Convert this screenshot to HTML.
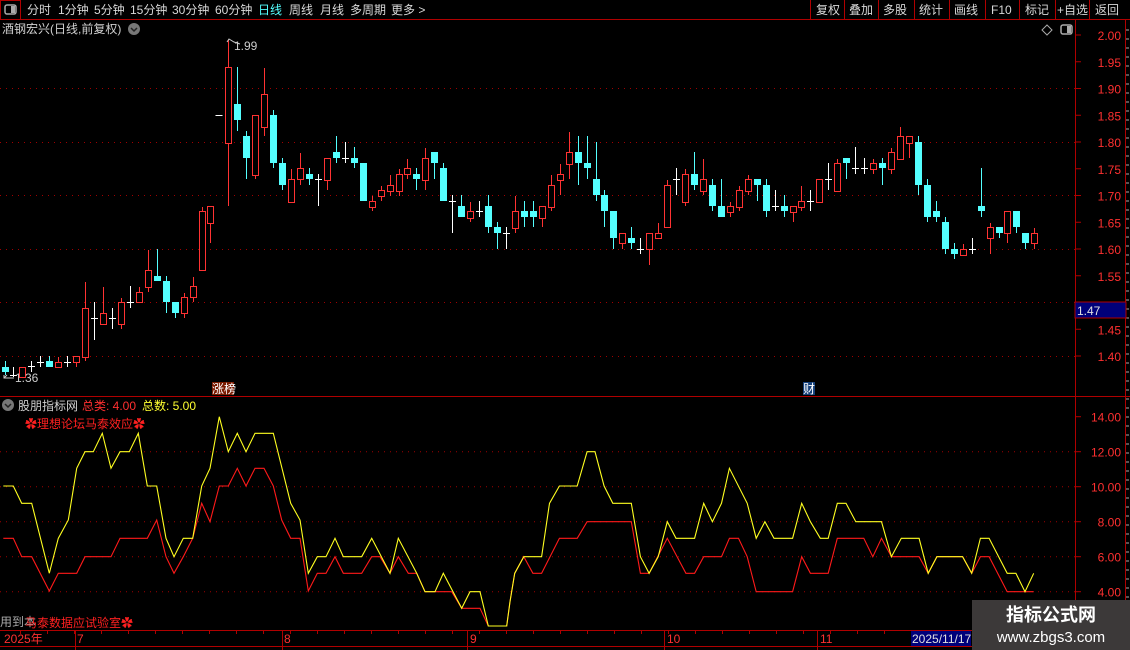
<!DOCTYPE html>
<html><head><meta charset="utf-8">
<style>
html,body{margin:0;padding:0;background:#000;width:1130px;height:650px;overflow:hidden}
svg{display:block}
text{font-family:"Liberation Sans","Noto Sans CJK SC",sans-serif;font-size:12px}
</style></head>
<body>
<svg id="s" width="1130" height="650" xmlns="http://www.w3.org/2000/svg">
<rect width="1130" height="650" fill="#000"/>
<line x1="0" y1="19.5" x2="1130" y2="19.5" stroke="#b00000"/>
<rect x="0.5" y="0.5" width="20" height="19" fill="none" stroke="#b00000"/>
<rect x="5" y="5" width="11" height="9" rx="2" fill="none" stroke="#aaa" stroke-width="1.5"/>
<rect x="11" y="6" width="4" height="7" fill="#aaa"/>
<g fill="#d8d8d8">
<text x="27" y="14">分时</text><text x="58" y="14">1分钟</text><text x="94" y="14">5分钟</text><text x="130" y="14">15分钟</text><text x="172" y="14">30分钟</text><text x="215" y="14">60分钟</text>
<text x="258" y="14" fill="#54ffff">日线</text><text x="289" y="14">周线</text><text x="320" y="14">月线</text><text x="350" y="14">多周期</text><text x="391" y="14">更多 &gt;</text>
</g>
<g stroke="#b00000"><line x1="810.5" y1="0" x2="810.5" y2="19"/><line x1="844.5" y1="0" x2="844.5" y2="19"/><line x1="878.5" y1="0" x2="878.5" y2="19"/><line x1="914.5" y1="0" x2="914.5" y2="19"/><line x1="949.5" y1="0" x2="949.5" y2="19"/><line x1="985.5" y1="0" x2="985.5" y2="19"/><line x1="1019.5" y1="0" x2="1019.5" y2="19"/><line x1="1055.5" y1="0" x2="1055.5" y2="19"/><line x1="1089.5" y1="0" x2="1089.5" y2="19"/></g>
<g fill="#d8d8d8"><text x="816" y="14">复权</text><text x="849" y="14">叠加</text><text x="883" y="14">多股</text><text x="919" y="14">统计</text><text x="954" y="14">画线</text><text x="991" y="14">F10</text><text x="1025" y="14">标记</text><text x="1057" y="14">+自选</text><text x="1095" y="14">返回</text></g>
<text x="2" y="33" fill="#d0d0d0">酒钢宏兴(日线,前复权)</text>
<circle cx="134" cy="29" r="6" fill="#777"/><path d="M131 28 L134 31 L137 28" stroke="#222" stroke-width="1.5" fill="none"/>
<path d="M1047 25 L1052 30 L1047 35 L1042 30Z" fill="none" stroke="#aaa"/>
<rect x="1061" y="25" width="11" height="9" rx="2" fill="none" stroke="#aaa" stroke-width="1.5"/><rect x="1067" y="26" width="4" height="7" fill="#aaa"/>
<g stroke="#b00000"><line x1="1075.5" y1="20" x2="1075.5" y2="650"/><line x1="1125.5" y1="20" x2="1125.5" y2="650"/>
<line x1="0" y1="396.5" x2="1130" y2="396.5"/><line x1="0" y1="630.5" x2="1130" y2="630.5"/><line x1="0" y1="646.5" x2="1130" y2="646.5"/></g>
<g id="grid" stroke="#a00000" stroke-dasharray="1,5"></g>
<g id="ax"></g>
<rect x="1075" y="302" width="51" height="16" fill="#00007a" stroke="#b00000"/>
<text x="1077" y="315" fill="#e0e0e0">1.47</text>
<g id="cd"></g>
<text x="234" y="50" fill="#ccc">1.99</text><path d="M227 42 L229 39 L234 42 L240 44" stroke="#ccc" fill="none"/>
<text x="15" y="382" fill="#ccc">1.36</text><path d="M4 375 L4 378 L14 378 M4 378 L7 375" stroke="#ccc" fill="none"/>
<rect x="212" y="382" width="22" height="13" fill="#7a1a00"/><text x="212" y="393" fill="#fff">涨榜</text>
<rect x="803" y="382" width="12" height="13" fill="#15407a"/><text x="803" y="393" fill="#fff">财</text>
<circle cx="8" cy="405" r="6" fill="#777"/><path d="M5 404 L8 407 L11 404" stroke="#222" stroke-width="1.5" fill="none"/>
<text x="18" y="410" fill="#cfcfcf">股朋指标网</text>
<text x="82" y="410" fill="#ff3030">总类: 4.00</text>
<text x="142" y="410" fill="#ffff30">总数: 5.00</text>
<text x="25" y="428" fill="#ff2020">✿理想论坛马泰效应✿</text>
<g id="ind"></g>
<text x="0" y="626" fill="#aaa">用到本</text>
<text x="25" y="627" fill="#ff2020">马泰数据应试验室✿</text>
<g fill="#ff3030"><text x="4" y="643">2025年</text><text x="77" y="643">7</text><text x="284" y="643">8</text><text x="470" y="643">9</text><text x="667" y="643">10</text><text x="820" y="643">11</text></g>
<g stroke="#b00000"><line x1="75.5" y1="630" x2="75.5" y2="650"/><line x1="282.5" y1="630" x2="282.5" y2="650"/><line x1="467.5" y1="630" x2="467.5" y2="650"/><line x1="664.5" y1="630" x2="664.5" y2="650"/><line x1="817.5" y1="630" x2="817.5" y2="650"/></g>
<rect x="911" y="631" width="60" height="15" fill="#00007a"/><text x="912" y="643" fill="#e0e0e0">2025/11/17</text>
<rect x="972" y="600" width="158" height="50" fill="#3c3939"/>
<text x="1051" y="621" fill="#fff" text-anchor="middle" style="font-size:18px;font-weight:bold">指标公式网</text>
<text x="1051" y="642" fill="#fff" text-anchor="middle" style="font-size:15px">www.zbgs3.com</text>
</svg>
<script>
var NS="http://www.w3.org/2000/svg";
function el(p,t,a){var e=document.createElementNS(NS,t);for(var k in a)e.setAttribute(k,a[k]);document.getElementById(p).appendChild(e);return e;}
[88,142,195,249,302,356].forEach(function(y){el('grid','line',{x1:0,y1:y+.5,x2:1075,y2:y+.5});});
[451.7,486.7,521.7,556.7,591.7].forEach(function(y){el('grid','line',{x1:0,y1:y,x2:1075,y2:y});});
for(var i=0;i<13;i++){var p=2-0.05*i,y=35+i*26.75;if(i==10)continue;
 var t=el('ax','text',{x:1121,y:y+5,fill:'#ff3030','text-anchor':'end'});t.textContent=p.toFixed(2);
 el('ax','line',{x1:1076,y1:y,x2:1081,y2:y,stroke:'#b00000'});}
[14,12,10,8,6,4].forEach(function(v){var y=591.7-(v-4)*17.5;var t=el('ax','text',{x:1121,y:y+5,fill:'#ff3030','text-anchor':'end'});t.textContent=v.toFixed(2);el('ax','line',{x1:1076,y1:y,x2:1081,y2:y,stroke:'#b00000'});});
for(var y=30;y<630;y+=9){el('ax','line',{x1:1126,y1:y,x2:1129,y2:y,stroke:'#aaa'});}
var D=[
['c',361,367,372,375],['w',367,375,375,377],['r',367,367,377,377],['w',361,366,366,372],['w',356,362,362,367],['c',356,361,367,367],['r',357,362,367,367],['w',356,362,362,367],['r',356,356,362,367],['r',282,308,357,361],
['w',302,318,318,340],['r',287,313,324,324],['w',308,318,318,329],['r',298,302,324,329],['w',286,302,302,308],['r',287,292,302,302],['r',250,270,287,292],['c',249,276,281,281],['c',276,281,302,313],['c',302,302,313,318],
['r',293,297,313,318],['r',277,286,297,302],['r',207,211,270,270],['r',206,206,223,243],['d',115,115,115,115],['r',40,67,143,206],['c',67,104,120,131],['c',131,136,158,179],['r',115,115,175,179],['r',68,94,127,136],
['c',110,115,163,168],['c',158,163,185,190],['r',169,179,202,202],['r',153,168,179,185],['c',168,174,179,185],['w',174,179,179,206],['r',158,158,180,190],['c',136,152,158,163],['w',142,158,158,163],['c',147,158,163,168],
['c',163,163,201,201],['r',196,201,207,211],['r',186,190,196,201],['r',175,185,191,196],['r',169,174,191,196],['r',159,168,174,179],['c',168,174,179,190],['r',148,158,180,190],['c',152,152,163,179],['c',163,168,201,201],
['w',195,201,201,233],['c',195,206,217,217],['r',202,211,218,222],['w',201,211,211,217],['c',195,206,227,233],['c',222,227,233,249],['w',227,233,233,249],['r',196,211,228,233],['c',201,211,217,227],['c',201,211,217,227],
['r',206,206,218,227],['r',175,185,207,211],['r',164,174,180,195],['r',132,152,164,179],['c',136,152,163,185],['c',136,163,168,179],['c',142,179,195,201],['c',190,195,211,227],['c',211,211,238,249],['r',233,233,243,249],
['c',227,238,243,249],['w',238,249,249,254],['r',233,233,249,265],['r',223,233,238,238],['r',180,185,227,227],['w',168,179,179,195],['r',169,174,202,206],['c',152,174,185,190],['r',159,179,191,195],['c',179,185,206,211],
['c',179,206,217,217],['r',202,206,212,217],['r',186,190,207,211],['r',175,179,191,195],['c',179,179,185,201],['c',179,185,211,217],['w',190,206,206,211],['c',195,206,211,217],['r',206,206,212,222],['r',186,201,207,211],
['w',190,201,201,211],['r',179,179,202,202],['w',163,179,179,190],['r',159,163,191,191],['c',158,158,163,179],['w',147,168,168,174],['w',158,168,168,174],['r',159,163,169,174],['c',158,163,168,185],['r',148,152,169,174],
['r',127,136,159,159],['r',136,136,143,158],['c',136,142,185,195],['c',179,185,217,222],['c',201,211,217,222],['c',217,222,249,254],['c',243,249,254,259],['r',244,249,255,255],['w',238,249,249,254],['c',168,206,211,217],
['r',223,227,238,254],['c',227,227,233,238],['r',211,211,233,243],['c',211,211,227,233],['c',233,233,243,249],['r',228,233,243,249]];
var RED='#ff3232',CY='#54ffff',WH='#ffffff';
D.forEach(function(d,i){var cx=Math.round(4.5+i*8.955)+.5,t=d[0],h=d[1],a=d[2],b=d[3],l=d[4];
 if(t=='d'){el('cd','line',{x1:cx-4,y1:a+.5,x2:cx+3,y2:a+.5,stroke:WH});return;}
 if(t=='w'){el('cd','line',{x1:cx,y1:h,x2:cx,y2:l,stroke:WH});el('cd','line',{x1:cx-3.5,y1:a+.5,x2:cx+3.5,y2:a+.5,stroke:WH});return;}
 var c=t=='r'?RED:CY;
 if(h<a)el('cd','line',{x1:cx,y1:h,x2:cx,y2:a,stroke:c});
 if(l>b)el('cd','line',{x1:cx,y1:b,x2:cx,y2:l,stroke:c});
 if(t=='r')el('cd','rect',{x:cx-3,y:a+.5,width:6,height:Math.max(1,b-a),fill:'#000',stroke:c});
 else el('cd','rect',{x:cx-3.5,y:a,width:7,height:Math.max(2,b-a),fill:c});
});
function pl(pts,ox,oy,sx){return pts.map(function(p){return (ox+p[0]/sx).toFixed(1)+','+(oy+p[1]/3).toFixed(1);}).join(' ');}
var y9=[[10,243],[40,243],[65,295],[95,295],[148,505],[175,400],[205,345],[230,190],[255,140],[280,140],[307,85],[333,190],[360,140],[388,140],[415,85],[442,243],[470,243],[498,400],[522,455],[550,400],[578,400],[605,243],[630,190],[658,35],[685,140],[712,85],[738,140],[765,85],[820,85],[872,295],[900,345],[925,505],[952,455],[978,455],[1005,400],[1030,455],[1085,455],[1115,400],[1170,505],[1195,400],[1250,505],[1275,560],[1305,560],[1330,505],[1385,610],[1410,560],[1440,560],[1465,663],[1520,663]];
var y10=[[0,590],[12,505],[35,455],[80,455],[100,295],[125,243],[170,243],[195,140],[215,140],[238,243],[260,295],[307,295],[330,455],[352,505],[375,455],[398,350],[420,400],[467,400],[490,295],[512,350],[535,295],[555,190],[600,295],[623,400],[645,350],[668,400],[715,400],[738,295],[760,350],[785,400],[805,400],[828,295],[850,295],[875,350],[940,350],[965,455],[990,400],[1035,400],[1058,505],[1080,455],[1145,455],[1168,505],[1190,400],[1212,400],[1258,505],[1280,505],[1303,560],[1325,505]];
var r9=[[10,400],[40,400],[65,455],[95,455],[148,558],[175,505],[230,505],[255,455],[333,455],[360,400],[442,400],[470,345],[498,455],[522,505],[550,455],[578,400],[605,295],[630,350],[658,243],[685,243],[712,190],[738,243],[765,190],[792,190],[820,243],[845,345],[872,400],[900,400],[925,558],[952,505],[978,505],[1005,455],[1030,505],[1085,505],[1115,455],[1140,455],[1170,505],[1195,455],[1225,505],[1250,505],[1275,560],[1305,560],[1355,560],[1385,610],[1440,610],[1465,663],[1520,663]];
var r10=[[0,590],[12,505],[35,455],[58,505],[80,505],[125,400],[170,400],[195,350],[307,350],[330,505],[352,505],[398,400],[445,505],[467,505],[490,455],[535,455],[555,400],[578,400],[600,455],[623,560],[715,560],[738,455],[760,505],[805,505],[828,400],[895,400],[918,455],[940,400],[965,455],[1035,455],[1058,505],[1080,455],[1145,455],[1168,505],[1190,455],[1212,455],[1258,560],[1325,560]];
var S2=2.53;
el('ind','polyline',{points:pl(r9,0,405,3)+' '+pl(r10,510,405,S2),fill:'none',stroke:'#ff1a1a','stroke-width':1.1});
el('ind','polyline',{points:pl(y9,0,405,3)+' '+pl(y10,510,405,S2),fill:'none',stroke:'#ffff20','stroke-width':1.1});
for(var x=20;x<1075;x+=27){el('ind','line',{x1:x+.5,y1:631,x2:x+.5,y2:634,stroke:'#b00000'});}
</script>
</body></html>
